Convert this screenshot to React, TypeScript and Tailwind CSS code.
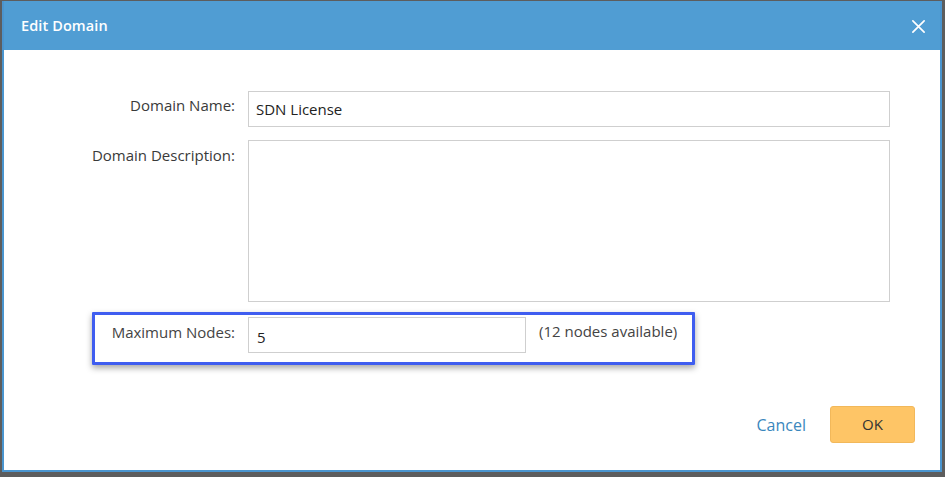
import React from "react";

export default function App() {
  return (
    <div
      className="w-[945px] h-[477px] bg-[#5d5d5d] pt-[1px] pl-[2px] overflow-hidden"
      style={{ fontFamily: '"Open Sans", "Noto Sans", sans-serif' }}
    >
      <div className="w-[940px] h-[471px] flex flex-col border-2 border-t-0 border-[#4a95cf] bg-white">
        <div className="h-[49px] bg-[#509dd3] flex items-center justify-between pl-[17px] pr-[14px] shrink-0">
          <span className="text-white text-[14.5px] font-semibold tracking-[0.1px]">Edit Domain</span>
          <svg width="15" height="15" viewBox="0 0 16 16" className="mt-[2px]">
            <path d="M2 2 L14 14 M14 2 L2 14" stroke="white" strokeWidth="1.8" strokeLinecap="round" />
          </svg>
        </div>
        <div className="flex-1 flex flex-col text-[#3a3a3a] text-[15px]">
          <div className="pt-[41px] flex flex-col gap-[13px]">
            <div className="flex">
              <label className="w-[231px] text-right pt-[4px] leading-[20px]">Domain Name:</label>
              <div className="ml-[13px] w-[642px] h-[36px] border border-[#cfcfcf] flex items-center px-[7px] text-[#222]">
                SDN License
              </div>
            </div>
            <div className="flex">
              <label className="w-[231px] text-right pt-[5px] leading-[20px]">Domain Description:</label>
              <div className="ml-[13px] w-[642px] h-[162px] border border-[#cfcfcf]"></div>
            </div>
          </div>
          <div className="mt-[10px] ml-[88px] w-[603px] h-[53px] border-[3px] border-[#3f5df0] rounded-[1px] shadow-[0_3px_6px_rgba(0,0,0,0.35)] flex pt-[2px]">
            <label className="w-[140px] text-right pt-[5px] leading-[20px] text-[#444]">Maximum Nodes:</label>
            <div className="ml-[13px] w-[278px] h-[36px] border border-[#cfcfcf] flex items-center px-[8px] pt-[4px] text-[#222]">
              5
            </div>
            <span className="ml-[13px] pt-[4px] leading-[20px] text-[#444]">(12 nodes available)</span>
          </div>
          <div className="mt-[41px] flex justify-end items-center pr-[25px]">
            <span className="text-[#3a87bd] text-[16px] mr-[24px]">Cancel</span>
            <div className="w-[85px] h-[37px] bg-[#fec566] border border-[#f2b85a] rounded-[3px] flex items-center justify-center text-[#333] text-[15px]">
              OK
            </div>
          </div>
        </div>
      </div>
    </div>
  );
}
